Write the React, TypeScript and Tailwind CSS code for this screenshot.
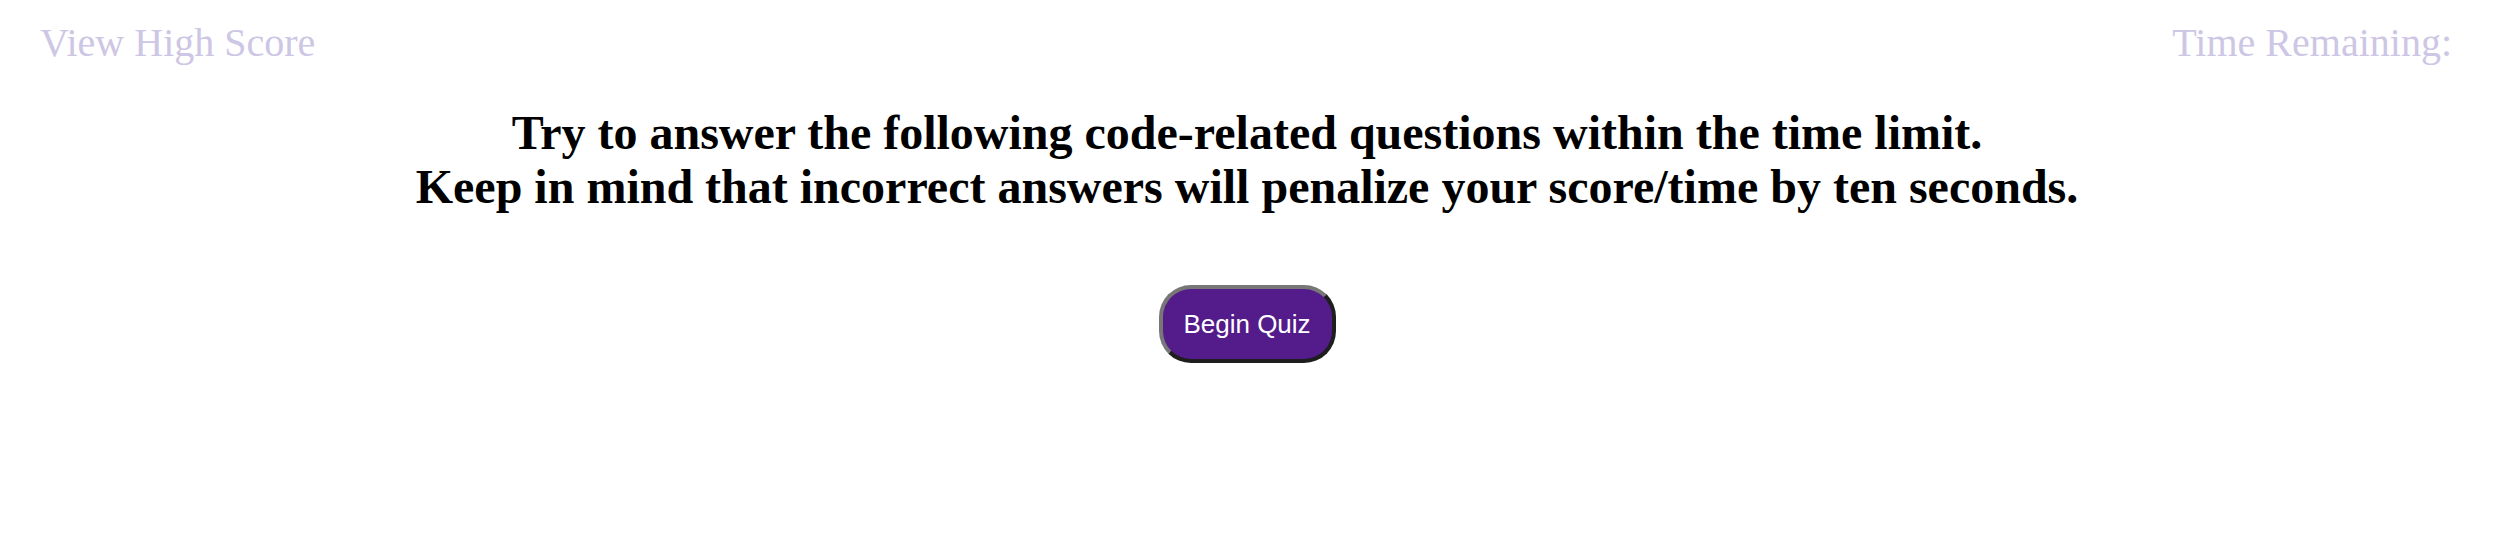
export default function App() {
  return (
    <div className="min-h-[558px] w-full bg-white">
      {/* top bar */}
      <header className="flex items-start justify-between px-10 pt-[20px] font-['Liberation_Serif',serif] text-[40px] leading-[1.15] text-[#cdc6e4]">
        <span>View High Score</span>
        <span className="pr-[2px]">Time Remaining:</span>
      </header>

      <main className="flex flex-col items-center">
        <h1 className="mt-[40px] text-center font-['Liberation_Serif',serif] text-[48px] font-bold leading-[54px] text-black">
          Try to answer the following code-related questions within the time limit.
          <br />
          Keep in mind that incorrect answers will penalize your score/time by ten seconds.
        </h1>

        <button className="mt-[71px] h-[78px] w-[177px] rounded-[32px] border-4 border-t-[#777777] border-l-[#777777] border-r-[#1e1e1e] border-b-[#1e1e1e] bg-[#541b8a] font-['Liberation_Sans',Arial,sans-serif] text-[26px] text-white">
          Begin Quiz
        </button>
      </main>
    </div>
  );
}
